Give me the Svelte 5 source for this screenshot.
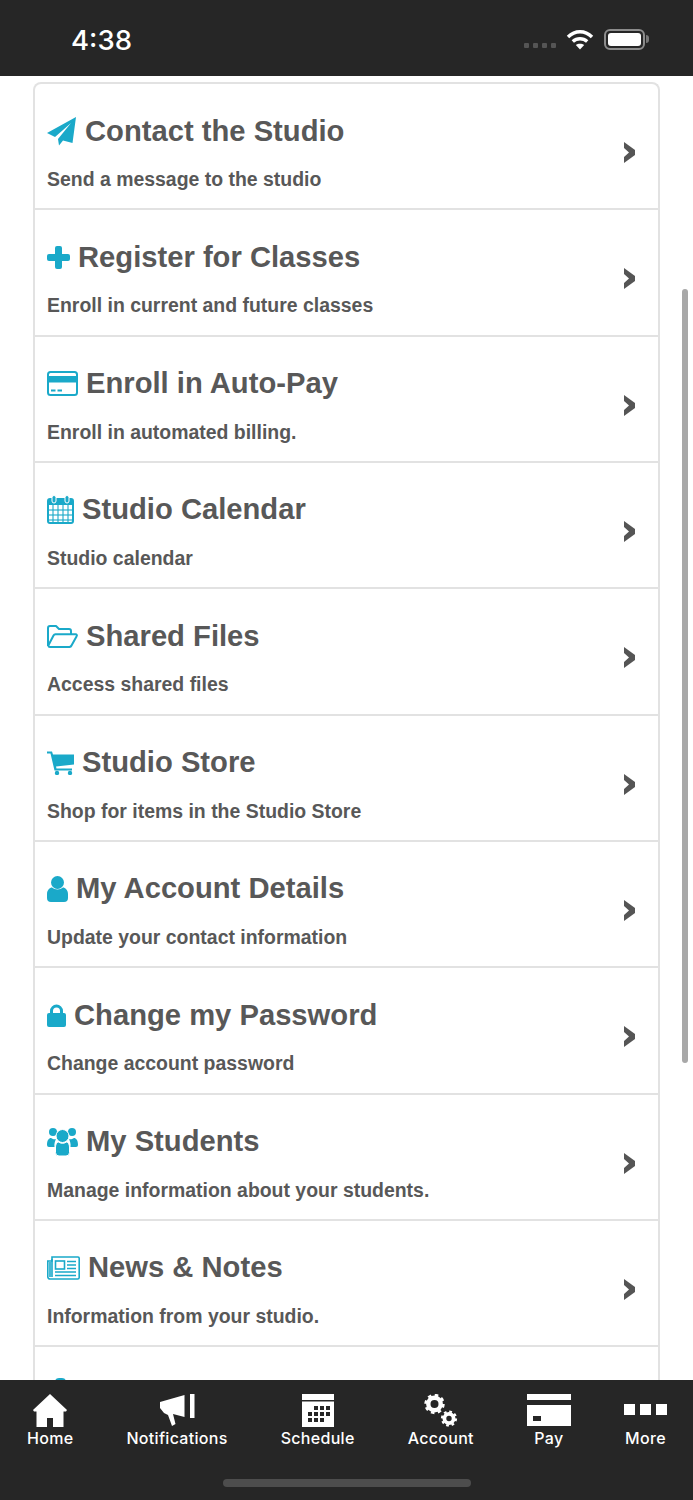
<script lang="ts">
  const rows = [
    { icon: 'plane', w: 30, h: 30, title: 'Contact the Studio', sub: 'Send a message to the studio' },
    { icon: 'plus', w: 23, h: 23, title: 'Register for Classes', sub: 'Enroll in current and future classes' },
    { icon: 'card', w: 31, h: 25, title: 'Enroll in Auto-Pay', sub: 'Enroll in automated billing.' },
    { icon: 'calendar', w: 27, h: 29, title: 'Studio Calendar', sub: 'Studio calendar' },
    { icon: 'folder', w: 31, h: 23, title: 'Shared Files', sub: 'Access shared files' },
    { icon: 'cart', w: 27, h: 24, title: 'Studio Store', sub: 'Shop for items in the Studio Store' },
    { icon: 'user', w: 21, h: 26, title: 'My Account Details', sub: 'Update your contact information' },
    { icon: 'lock', w: 19, h: 23, title: 'Change my Password', sub: 'Change account password' },
    { icon: 'group', w: 31, h: 29, title: 'My Students', sub: 'Manage information about your students.' },
    { icon: 'news', w: 33, h: 24, title: 'News & Notes', sub: 'Information from your studio.' },
    { icon: 'peek', w: 21, h: 32, title: '', sub: '' }
  ];

  const tabs = [
    { icon: 'home', w: 34, h: 33, label: 'Home' },
    { icon: 'horn', w: 35, h: 33, label: 'Notifications' },
    { icon: 'schedule', w: 32, h: 33, label: 'Schedule' },
    { icon: 'gears', w: 34, h: 33, label: 'Account' },
    { icon: 'pay', w: 44, h: 33, label: 'Pay' },
    { icon: 'more', w: 43, h: 33, label: 'More' }
  ];

  const calCols = [6, 11, 16, 21];
  const calRows = [15, 20, 25];
  const schedule = [
    [13, 13], [19, 13], [25, 13], [7, 19], [13, 19], [19, 19], [25, 19], [7, 25], [13, 25], [19, 25]
  ];
</script>

<div class="screen">
  <header class="status">
    <span class="time">4:38</span>
    <div class="status-icons">
      <div class="dots"><i></i><i></i><i></i><i></i></div>
      <svg width="28" height="21" viewBox="0 0 28 21" fill="none" stroke="#fff" stroke-width="3.4" aria-hidden="true">
        <path d="M2 8 C9 1 19 1 26 8" />
        <path d="M6.8 12.6 C11 8.8 17 8.8 21.2 12.6" />
        <path d="M14 20.5 L9.8 16 C12 14.2 16 14.2 18.2 16 Z" fill="#fff" stroke="none" />
      </svg>
      <div class="battery"><div class="cell"></div></div>
    </div>
  </header>

  <main class="content">
    <div class="card">
      {#each rows as r}
        <div class="row">
          <div class="text">
            <div class="title">
              <svg class="icon" width={r.w} height={r.h} viewBox="0 0 {r.w} {r.h}" fill="currentColor" aria-hidden="true">
                {#if r.icon === 'plane'}
                  <path d="M29 1 L0 17 L8 21 L24 7 L11 23 L12 29.5 L16 24.5 L25.5 27 Z" />
                {:else if r.icon === 'plus'}
                  <rect x="8" y="0" width="7" height="23" rx="2" />
                  <rect x="0" y="8" width="23" height="7" rx="2" />
                {:else if r.icon === 'card'}
                  <rect x="1" y="1" width="29" height="23" rx="2.5" fill="none" stroke="currentColor" stroke-width="2" />
                  <rect x="1" y="5" width="29" height="6.5" />
                  <path d="M4 19.5h4.5M10.5 19.5h4.5" stroke="currentColor" stroke-width="1.8" />
                {:else if r.icon === 'calendar'}
                  <rect x="1" y="4" width="25" height="24" rx="2" fill="none" stroke="currentColor" stroke-width="2" />
                  <rect x="1" y="4" width="25" height="6" />
                  <rect x="5" y="0.5" width="4" height="7.5" rx="2" stroke="#fff" stroke-width="1" />
                  <rect x="18" y="0.5" width="4" height="7.5" rx="2" stroke="#fff" stroke-width="1" />
                  {#each calCols as x}
                    <path d="M{x} 10v18" stroke="currentColor" stroke-width="1.1" />
                  {/each}
                  {#each calRows as y}
                    <path d="M1 {y}h25" stroke="currentColor" stroke-width="1.1" />
                  {/each}
                {:else if r.icon === 'folder'}
                  <g fill="none" stroke="currentColor" stroke-width="2" stroke-linejoin="round">
                    <path d="M1 21 V3 a2 2 0 0 1 2-2 h6 l3 3 h10 a2 2 0 0 1 2 2 v3" />
                    <path d="M1.3 20.5 L6.5 10.5 a2.5 2.5 0 0 1 2-1.3 H28.5 a1.3 1.3 0 0 1 1 2.2 L24.5 20.5 a2.5 2.5 0 0 1-2 1.5 H3 a1.8 1.8 0 0 1-1.7-1.5 Z" />
                  </g>
                {:else if r.icon === 'cart'}
                  <path d="M0 0.5 H5 L6 3.5 H27 V13.5 L9 15.5 L9.5 17.5 H25 V19.5 H7.5 L3.5 2.5 H0 Z" />
                  <circle cx="10" cy="22" r="2.2" />
                  <circle cx="23" cy="22" r="2.2" />
                {:else if r.icon === 'user'}
                  <circle cx="10.5" cy="6.5" r="6.5" />
                  <path d="M0 18 C0 14 3 11.5 5 11.5 C8 14 13 14 16 11.5 C18 11.5 21 14 21 18 V22 A4 4 0 0 1 17 26 H4 A4 4 0 0 1 0 22 Z" />
                {:else if r.icon === 'lock'}
                  <path d="M4.5 10 V7 a5 5 0 0 1 10 0 v3" fill="none" stroke="currentColor" stroke-width="3" />
                  <rect x="0" y="9" width="19" height="14" rx="2" />
                {:else if r.icon === 'group'}
                  <circle cx="6" cy="5" r="4" />
                  <circle cx="25" cy="5" r="4" />
                  <path d="M0 18 C0 13 2 11 4 11 C6 12.5 8 12.5 9 12 C8 14 7 17 7.5 20 H2 A2 2 0 0 1 0 18 Z" />
                  <path d="M31 18 C31 13 29 11 27 11 C25 12.5 23 12.5 22 12 C23 14 24 17 23.5 20 H29 A2 2 0 0 0 31 18 Z" />
                  <g stroke="#fff" stroke-width="1">
                    <circle cx="15.5" cy="9" r="6.5" />
                    <path d="M8.5 20 C8.5 17 10 15.5 11.5 15 C14 16.8 17 16.8 19.5 15 C21 15.5 22.5 17 22.5 20 V25.5 A3.5 3.5 0 0 1 19 29 H12 A3.5 3.5 0 0 1 8.5 25.5 Z" />
                  </g>
                {:else if r.icon === 'news'}
                  <g fill="none" stroke="currentColor" stroke-width="1.6">
                    <path d="M5 1 H31 a1.2 1.2 0 0 1 1.2 1.2 V21.5 a1.5 1.5 0 0 1-1.5 1.5 H3 a2.2 2.2 0 0 1-2.2-2.2 V5 H5 Z" />
                    <path d="M5 3 V21 M3 6 V21" />
                    <rect x="8.5" y="5" width="9" height="8" />
                    <path d="M20 5.5h9M20 9h9M20 12.5h9M8 16h21M8 19.5h21" />
                  </g>
                {:else if r.icon === 'peek'}
                  <rect x="8" y="0" width="11" height="32" rx="4" />
                {/if}
              </svg>
              {#if r.title}<span>{r.title}</span>{/if}
            </div>
            <p class="sub">{r.sub}</p>
          </div>
          <svg class="chevron" width="11" height="21" viewBox="0 0 11 21" aria-hidden="true">
            <path d="M0 0 L11 8 V13 L0 21 V15 L5 10.5 L0 6 Z" />
          </svg>
        </div>
      {/each}
    </div>
    <div class="scrollbar"></div>
  </main>

  <nav class="tabs">
    {#each tabs as t}
      <div class="tab">
        <svg width={t.w} height={t.h} viewBox="0 0 {t.w} {t.h}" fill="#fff" aria-hidden="true">
          {#if t.icon === 'home'}
            <path d="M17 0 L34 16 L33 17.5 H30.5 V33 H20 V24 H14 V33 H3.5 V17.5 H1 L0 16 Z" />
          {:else if t.icon === 'horn'}
            <path d="M0 8 L24.5 1 V23 L13 20 L15.5 30 L12 32 L8 21 L4 19 L0 14 Z" />
            <rect x="30" y="0" width="4.5" height="24" />
          {:else if t.icon === 'schedule'}
            <rect x="0" y="0" width="32" height="6" />
            <path d="M0 7.5 H32 V33 H0 Z" />
            {#each schedule as [x, y]}
              <rect x={x - 1} y={y - 1} width="4" height="4" fill="#262626" />
            {/each}
          {:else if t.icon === 'gears'}
            <g fill="none" stroke="#fff">
              <circle cx="10.5" cy="10" r="6.2" stroke-width="4.4" />
              <circle cx="10.5" cy="10" r="8.9" stroke-width="2.6" stroke-dasharray="3.5 3.49" />
              <circle cx="25" cy="24.5" r="4.6" stroke-width="3.8" />
              <circle cx="25" cy="24.5" r="7" stroke-width="2.2" stroke-dasharray="2.75 2.75" />
            </g>
          {:else if t.icon === 'pay'}
            <rect x="0" y="0" width="44" height="6" />
            <path d="M0 11 H44 V32 H0 Z" />
            <rect x="6" y="22" width="8" height="5" fill="#262626" />
          {:else if t.icon === 'more'}
            <rect x="0" y="10" width="11" height="11" />
            <rect x="16" y="10" width="11" height="11" />
            <rect x="32" y="10" width="11" height="11" />
          {/if}
        </svg>
        <span>{t.label}</span>
      </div>
    {/each}
    <div class="home-bar"></div>
  </nav>
</div>

<style>
  :global(body) {
    background: #fff;
  }

  .screen {
    width: 693px;
    height: 1500px;
    display: flex;
    flex-direction: column;
    overflow: hidden;
    font-family: "Liberation Sans", Arial, sans-serif;
  }

  .status {
    height: 76px;
    flex: none;
    background: #262626;
    display: flex;
    align-items: center;
    justify-content: space-between;
    padding: 0 48px 0 71px;
    box-sizing: border-box;
    color: #fff;
  }

  .time {
    font-family: Inter, sans-serif;
    font-size: 27.5px;
    font-weight: 500;
    margin-top: 4px;
  }

  .status-icons {
    display: flex;
    align-items: center;
    gap: 10px;
    margin-top: 2px;
  }

  .dots {
    display: flex;
    gap: 4px;
    align-self: flex-end;
    margin-bottom: 2px;
  }

  .dots i {
    width: 5px;
    height: 5px;
    border-radius: 1px;
    background: #555;
  }

  .battery {
    position: relative;
    width: 41px;
    height: 21px;
    box-sizing: border-box;
    border: 2px solid #8c8c8c;
    border-radius: 6px;
    padding: 2px;
  }

  .battery::after {
    content: "";
    position: absolute;
    right: -6px;
    top: 4px;
    width: 3px;
    height: 8px;
    border-radius: 0 3px 3px 0;
    background: #777;
  }

  .cell {
    height: 100%;
    background: #fff;
    border-radius: 3px;
  }

  .content {
    position: relative;
    flex: 1;
    min-height: 0;
    overflow: hidden;
    padding: 6px 33px 0;
    box-sizing: border-box;
  }

  .card {
    border: 2px solid #e2e2e2;
    border-bottom: none;
    border-radius: 8px 8px 0 0;
  }

  .row {
    height: 126.33px;
    box-sizing: border-box;
    border-bottom: 2px solid #e2e2e2;
    display: flex;
    justify-content: space-between;
    padding: 28px 23px 0 12px;
  }

  .title {
    display: flex;
    align-items: center;
    gap: 8px;
    height: 38px;
    font-size: 29.2px;
    font-weight: 700;
    color: #585858;
    white-space: nowrap;
  }

  .icon {
    flex: none;
    color: #1aa9c9;
  }

  .sub {
    margin: 17px 0 0;
    font-size: 19.45px;
    line-height: 24px;
    font-weight: 700;
    color: #585858;
  }

  .chevron {
    flex: none;
    margin-top: 30px;
    fill: #555;
  }

  .scrollbar {
    position: absolute;
    right: 5px;
    top: 213px;
    width: 6px;
    height: 774px;
    border-radius: 3px;
    background: #a8a8a8;
  }

  .tabs {
    position: relative;
    height: 120px;
    flex: none;
    background: #262626;
    display: flex;
    justify-content: space-between;
    align-items: flex-start;
    padding: 14px 26px 0 27px;
    box-sizing: border-box;
    color: #fff;
  }

  .tab {
    display: flex;
    flex-direction: column;
    align-items: center;
  }

  .tab span {
    font-family: Inter, sans-serif;
    font-size: 16px;
    font-weight: 500;
    letter-spacing: 0.3px;
    line-height: 22px;
    white-space: nowrap;
  }

  .home-bar {
    position: absolute;
    left: 223px;
    bottom: 13px;
    width: 248px;
    height: 8px;
    border-radius: 4px;
    background: #4d4d4d;
  }
</style>
